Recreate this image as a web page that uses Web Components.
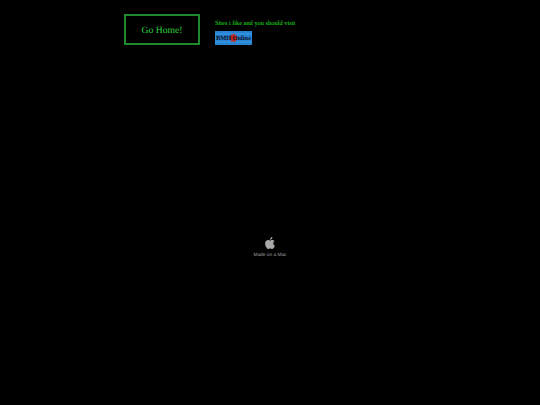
<!DOCTYPE html>
<html>
<head>
<meta charset="utf-8">
<title>Go Home</title>
<style>
html, body { margin: 0; height: 100%; background: #000; overflow: hidden; }
</style>
</head>
<body>
<home-page>
    <home-button slot="nav">Go Home!</home-button>
    <link-list slot="links" title="Sites i like and you should visit"></link-list>
    <mac-badge slot="footer">Made on a Mac</mac-badge>
</home-page>

<script>
class HomePage extends HTMLElement {
    constructor(){
        super();
        this.attachShadow({mode: 'open'}).innerHTML = `
        <style>
        :host { display: block; width: 540px; height: 405px; background: #000; font-family: "Liberation Serif", serif; text-rendering: geometricPrecision; }
        .top { display: flex; gap: 15px; padding: 14px 0 0 124px; height: 31px; }
        .foot { display: flex; justify-content: center; padding-top: 192px; }
        </style>
        <div class="top">
            <slot name="nav"></slot>
            <slot name="links"></slot>
        </div>
        <div class="foot"><slot name="footer"></slot></div>
        `;
    }
}

class HomeButton extends HTMLElement {
    constructor(){
        super();
        this.attachShadow({mode: 'open'}).innerHTML = `
        <style>
        :host {
            display: flex;
            align-items: center;
            justify-content: center;
            box-sizing: border-box;
            width: 76px;
            height: 31px;
            padding-top: 2px;
            border: 2px solid #1f8a2a;
            color: #2fd640;
            font-size: 9.6px;
            cursor: pointer;
        }
        </style>
        <slot></slot>
        `;
    }
}

class LinkList extends HTMLElement {
    constructor(){
        super();
        this.attachShadow({mode: 'open'}).innerHTML = `
        <style>
        :host { display: flex; flex-direction: column; align-items: flex-start; gap: 3px; padding-top: 5px; }
        p { margin: 0; color: #22e022; font-size: 6.4px; line-height: 9px; white-space: nowrap; }
        .badge {
            position: relative;
            box-sizing: border-box;
            width: 37px;
            height: 14px;
            display: flex;
            align-items: center;
            justify-content: space-between;
            padding: 0 1px;
            background: repeating-linear-gradient(#2b82d0 0 2px, #2f8fdf 2px 4px);
            color: #050c1c;
            font-size: 6.4px;
            font-weight: bold;
            white-space: nowrap;
            text-decoration: none;
        }
        svg { position: absolute; left: 14px; top: 2px; }
        span { position: relative; }
        </style>
        <p>${this.getAttribute('title')}</p>
        <a class="badge" href="#">
            <svg width="9" height="10" viewBox="0 0 9 10"><path fill="#c8281e" d="M4.5 0l.9 2 1.8-1-.4 2.1L9 3.6 7.3 5 9 6.4l-2.2.5.4 2.1-1.8-1-.9 2-.9-2-1.8 1 .4-2.1L0 6.4 1.700 5 0 3.600l2.200-.5L1.800 1l1.800 1z"/></svg>
            <span>BMH</span>
            <span>Online</span>
        </a>
        `;
    }
}

class MacBadge extends HTMLElement {
    constructor(){
        super();
        this.attachShadow({mode: 'open'}).innerHTML = `
        <style>
        :host {
            display: flex;
            flex-direction: column;
            align-items: center;
            gap: 4px;
            color: #a8a8a8;
            font-family: "Liberation Sans", sans-serif;
            font-size: 4.8px;
            line-height: 6px;
        }
        svg { display: block; }
        </style>
        <svg width="10" height="12" viewBox="0 0 814 1000"><path fill="#a8a8a8" d="M788 341c-6 4-108 62-108 190 0 149 131 201 135 203-1 3-21 72-69 142-43 62-88 123-156 123s-86-40-164-40c-77 0-104 41-166 41s-106-57-156-127C46 790 0 663 0 543c0-194 126-297 250-297 66 0 121 43 162 43 39 0 101-46 176-46 29 0 131 3 200 98zM554 160c31-37 53-88 53-139 0-7-1-14-2-20-51 2-111 34-147 76-28 32-55 83-55 135 0 8 1 16 2 18 3 1 8 1 13 1 45 0 103-31 136-71z"/></svg>
        <slot></slot>
        `;
    }
}

customElements.define('home-page', HomePage);
customElements.define('home-button', HomeButton);
customElements.define('link-list', LinkList);
customElements.define('mac-badge', MacBadge);
</script>
</body>
</html>
